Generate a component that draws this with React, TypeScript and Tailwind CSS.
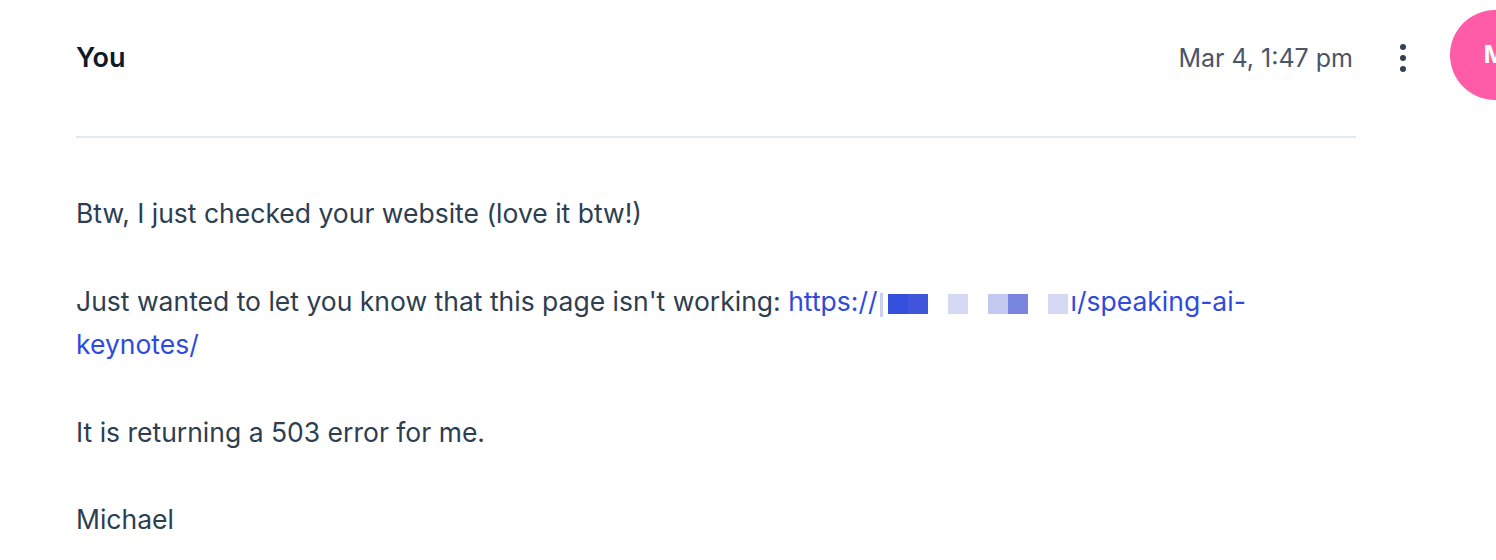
const cells = [
  "#3550dc",
  "#4055dc",
  "transparent",
  "#d5d9f5",
  "transparent",
  "#c4c9f1",
  "#7a85e0",
  "transparent",
  "#d5d9f5",
];

const Redacted = () => {
  return (
    <span className="inline-flex align-[-3px]">
      {cells.map((c, i) => (
        <span key={i} className="inline-block w-[20px] h-[20px]" style={{ backgroundColor: c }} />
      ))}
    </span>
  );
};

const App = () => {
  return (
    <div
      className="flex items-start w-[1496px] h-[560px] overflow-hidden bg-white"
      style={{ fontFamily: "Inter, 'Noto Sans', sans-serif" }}
    >
      <div className="pl-[76px] w-[1356px] shrink-0">
        <div className="h-[115px] flex items-center justify-between">
          <span className="text-[27px] font-semibold text-[#111827] pt-[2px]">You</span>
          <span className="text-[25px] text-[#4a5568] pr-[3px] pt-[2px]">Mar 4, 1:47 pm</span>
        </div>
        <div className="mt-[21px] h-[2px] bg-[#e2e8f0]" />
        <div className="mt-[54px] text-[26.5px] leading-[43.5px] text-[#2c3e50] space-y-[44px]">
          <p>Btw, I just checked your website (love it btw!)</p>
          <p>
            Just wanted to let you know that this page isn't working:{" "}
            <a href="#" className="text-[#2f4bdc]">
              https://
              {/* sliver of a redacted glyph */}
              <span className="inline-block w-[3px] h-[24px] ml-[2px] align-[-6px] bg-[#c9cff3]" />
              <span className="inline-block w-[5px]" />
              <Redacted />
              <span className="inline-block w-[3px]" />
              ı/speaking-ai-keynotes/
            </a>
          </p>
          <p>It is returning a 503 error for me.</p>
          <p>Michael</p>
        </div>
      </div>
      <button className="ml-[35px] mt-[40px] w-6 h-[36px] flex flex-col items-center justify-center gap-[5px] shrink-0">
        <span className="w-[6px] h-[6px] rounded-full bg-[#334155]" />
        <span className="w-[6px] h-[6px] rounded-full bg-[#334155]" />
        <span className="w-[6px] h-[6px] rounded-full bg-[#334155]" />
      </button>
      <div className="ml-[35px] mt-[10px] w-[90px] h-[90px] rounded-full bg-[#ff5ca8] flex items-center justify-center shrink-0">
        <span className="text-white text-[24px] font-bold">M</span>
      </div>
    </div>
  );
};

export default App;
